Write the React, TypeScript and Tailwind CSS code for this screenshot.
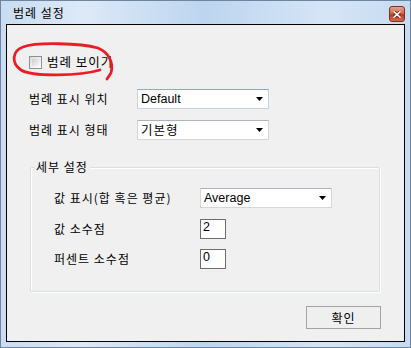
import React from "react";

const KR = "font-['Noto_Sans_CJK_KR','Liberation_Sans',sans-serif] tracking-[1px]";
const LAT = "font-['Liberation_Sans','Noto_Sans_CJK_KR',sans-serif]";

function Arrow() {
  return (
    <svg width="7" height="4" viewBox="0 0 7 4" className="shrink-0">
      <polygon points="0,0 7,0 3.5,4" fill="#000" />
    </svg>
  );
}

function Combo({ value, kr, focused }: { value: string; kr?: boolean; focused?: boolean }) {
  return (
    <div
      className={`w-[132px] h-[20px] bg-white border flex items-center justify-between pl-[3px] pr-[5px] ${
        focused ? "border-[#c3d3e6] border-t-[#8fa9c9]" : "border-[#d3d6db] border-t-[#b0b4ba]"
      }`}
    >
      <span className={`${kr ? KR : LAT} text-[12.5px] leading-none text-black`}>{value}</span>
      <Arrow />
    </div>
  );
}

function NumBox({ value }: { value: string }) {
  return (
    <div className="w-[26px] h-[20px] bg-white border border-[#6d6d6d] pl-[2px] pt-[1px] flex items-start">
      <span className={`${LAT} text-[12.5px] leading-[13px] text-black`}>{value}</span>
    </div>
  );
}

function Row({ label, children, labelW }: { label: string; children: React.ReactNode; labelW: string }) {
  return (
    <div className="flex items-center">
      <span className={`${KR} ${labelW} text-[12px] leading-none text-black`}>{label}</span>
      {children}
    </div>
  );
}

export default function App() {
  return (
    <div className="w-[411px] h-[348px] relative border border-[#6b85a3] bg-[linear-gradient(90deg,#c9dcf1_0%,#dde9f7_20%,#bdd5ef_50%,#d6e5f6_80%,#c6daf0_100%)] flex flex-col">
      {/* Title bar */}
      <div className="h-[23px] flex items-center justify-between pl-[12px] pr-[5px]">
        <span className={`${KR} text-[12px] leading-none text-black`}>범례 설정</span>
        <div className="w-[16px] h-[16px] mt-[3px] rounded-[3px] border border-[#7a3024] bg-[linear-gradient(180deg,#e8a390_0%,#d2684f_45%,#c0391f_55%,#d5694c_100%)] flex items-center justify-center">
          <svg width="8" height="7" viewBox="0 0 8 7">
            <path d="M1 0.8 L7 6.2 M7 0.8 L1 6.2" stroke="#5a1a10" strokeWidth="3" strokeLinecap="square" />
            <path d="M1 0.8 L7 6.2 M7 0.8 L1 6.2" stroke="#fff" strokeWidth="1.6" strokeLinecap="square" />
          </svg>
        </div>
      </div>

      {/* Client area */}
      <div className="ml-[5px] w-[399px] h-[318px] border border-black bg-[#f0f0f0] flex flex-col pl-[22px] pr-[23px] relative">
        {/* Checkbox */}
        <div className="mt-[31px] flex items-center h-[13px]">
          <div className="w-[13px] h-[13px] border border-[#8f8f8f] bg-[linear-gradient(135deg,#dcdcdc,#ffffff)] p-[2px]">
            <div className="w-full h-full bg-[linear-gradient(135deg,#cfcfcf,#f4f4f4)]" />
          </div>
          <span className={`${KR} ml-[5px] text-[12.5px] leading-none text-black`}>범례 보이기</span>
        </div>

        {/* Legend position / type */}
        <div className="mt-[20px]">
          <Row label="범례 표시 위치" labelW="w-[108px]">
            <Combo value="Default" focused />
          </Row>
        </div>
        <div className="mt-[11px]">
          <Row label="범례 표시 형태" labelW="w-[108px]">
            <Combo value="기본형" kr />
          </Row>
        </div>

        {/* Group box */}
        <div className="ml-[1px] mt-[27px] w-[350px] h-[125px] border border-[#d5dfe5] rounded-[2px] shadow-[1px_1px_0_#ffffff,inset_1px_1px_0_#ffffff] relative flex flex-col pl-[23px]">
          <span className={`${KR} absolute -top-[7px] left-[3px] px-[2px] bg-[#f0f0f0] text-[12px] leading-none text-black`}>
            세부 설정
          </span>
          <div className="mt-[20px]">
            <Row label="값 표시(합 혹은 평균)" labelW="w-[146px]">
              <Combo value="Average" />
            </Row>
          </div>
          <div className="mt-[11px]">
            <Row label="값 소수점" labelW="w-[146px]">
              <NumBox value="2" />
            </Row>
          </div>
          <div className="mt-[10px]">
            <Row label="퍼센트 소수점" labelW="w-[146px]">
              <NumBox value="0" />
            </Row>
          </div>
        </div>

        {/* OK button */}
        <div className="mt-[14px] flex justify-end">
          <button className="w-[75px] h-[23px] border border-[#a3a3a3] bg-[#efefef] flex items-center justify-center">
            <span className={`${KR} text-[12px] leading-none text-black`}>확인</span>
          </button>
        </div>

        {/* Red hand-drawn annotation */}
        <svg className="absolute left-0 top-0 pointer-events-none" width="130" height="70" viewBox="7 24 130 70">
          <path
            d="M100 69 C80 75 32 76 21 69 C11 62 12 50 23 46 C36 41 80 42 98 47 C108 51 114 61 111 72 L107 78"
            fill="none"
            stroke="#ec1b24"
            strokeWidth="2.8"
            strokeLinecap="round"
            strokeLinejoin="round"
          />
        </svg>
      </div>
    </div>
  );
}
